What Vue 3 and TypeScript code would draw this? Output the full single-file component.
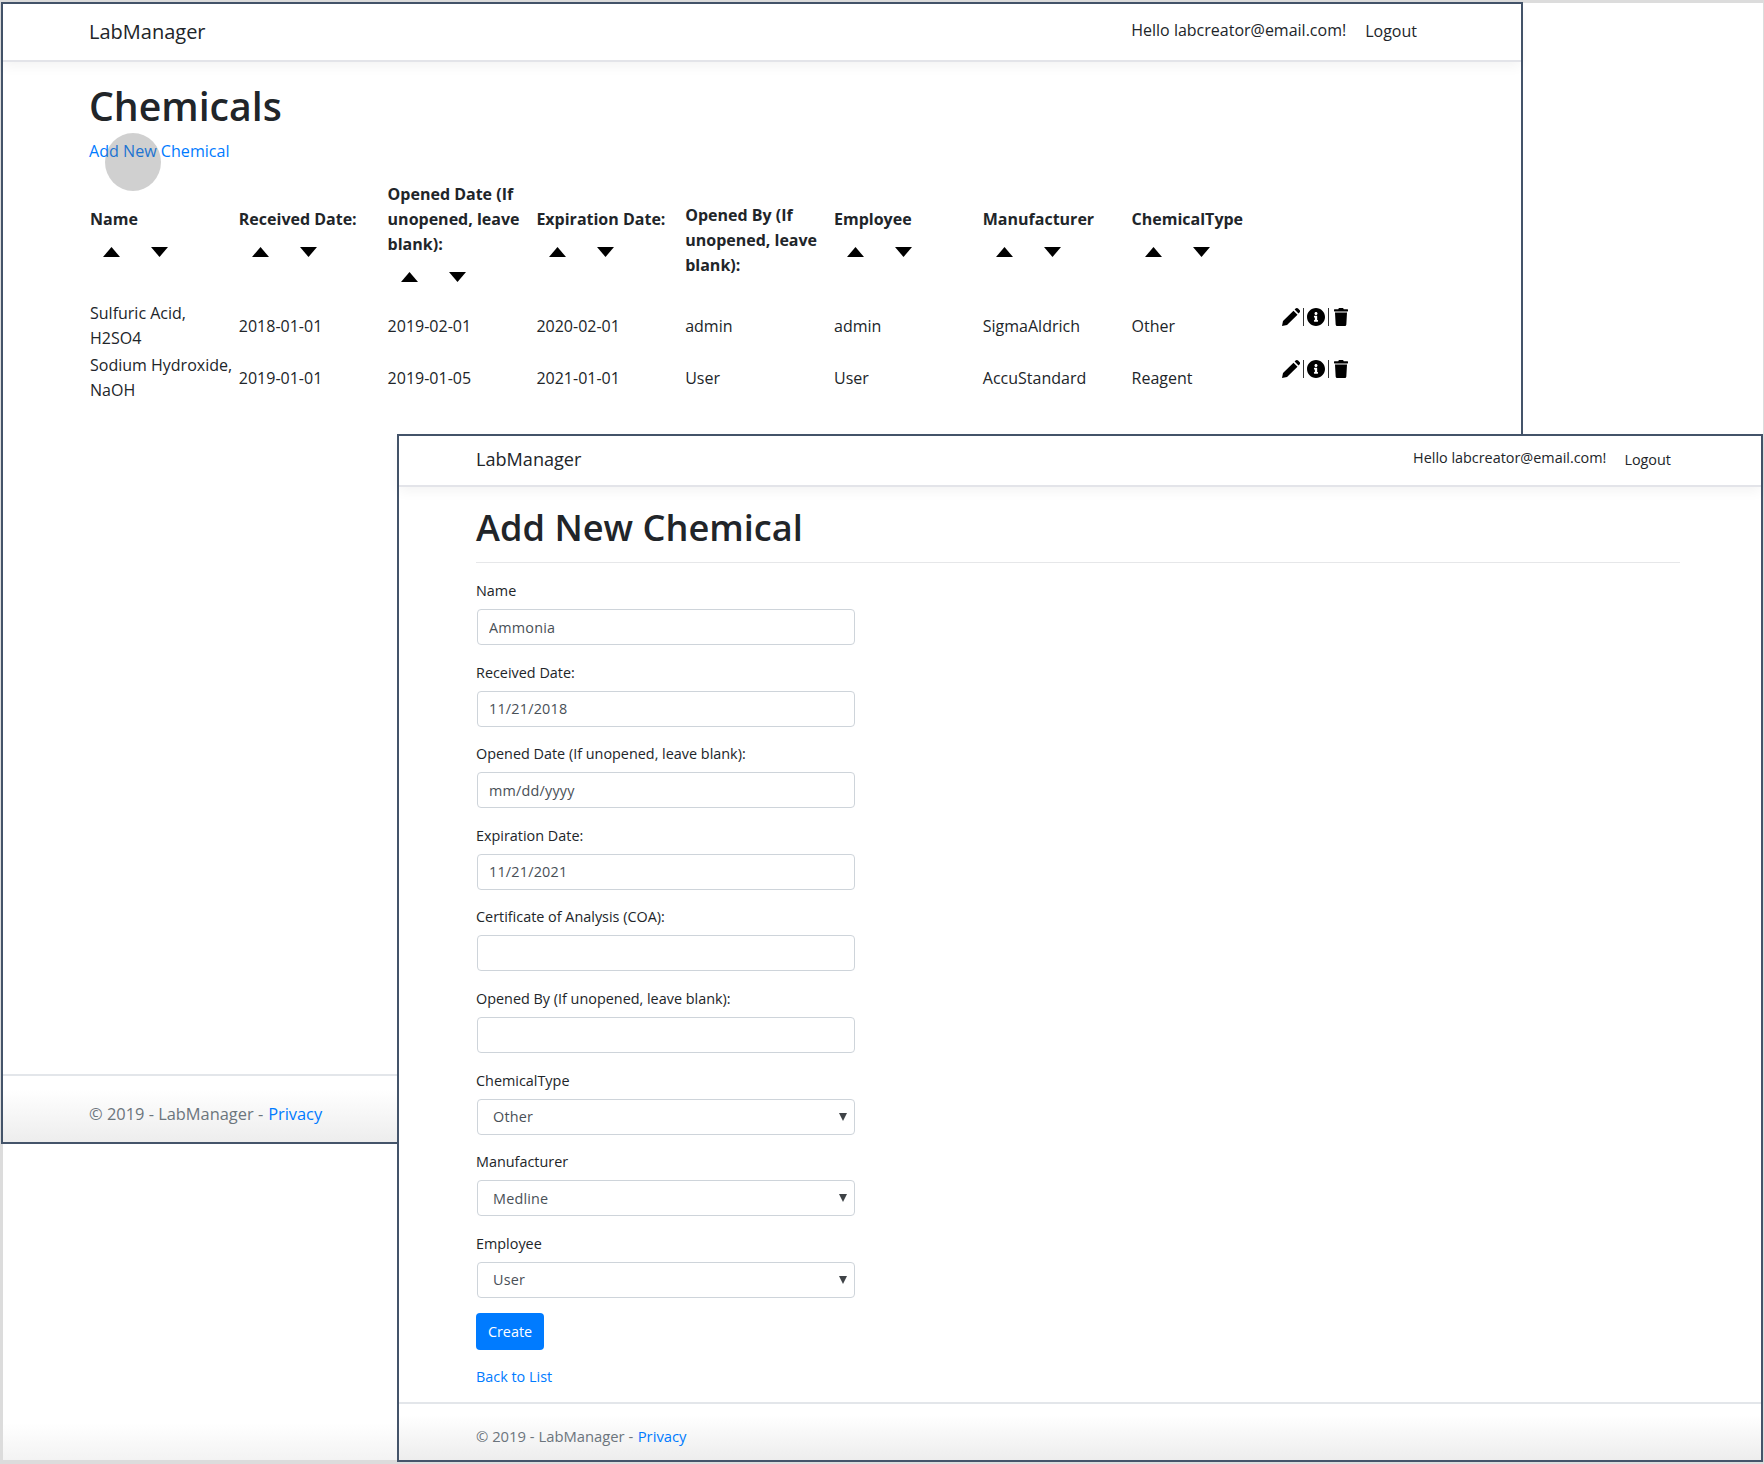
<template>
  <div class="page">
    <div class="backdrop"></div>

    <section class="window list-window">
      <header class="navbar">
        <span class="brand">LabManager</span>
        <span class="hello">Hello labcreator@email.com!</span>
        <span class="logout">Logout</span>
      </header>
      <main class="list-main">
        <h1 class="list-title">Chemicals</h1>
        <a class="link add-link" href="#">Add New Chemical</a>
        <table class="chem-table">
          <colgroup>
            <col v-for="n in 9" :key="n" class="chem-col" />
          </colgroup>
          <thead>
            <tr>
              <th v-for="col in columns" :key="col.label" :class="{ 'no-sort': !col.sort }">
                {{ col.label }}
                <div v-if="col.sort" class="sort">
                  <svg width="17" height="10" viewBox="0 0 17 10"><path d="M8.5 0 17 10H0z" /></svg>
                  <svg width="17" height="10" viewBox="0 0 17 10"><path d="M0 0h17L8.5 10z" /></svg>
                </div>
              </th>
              <th></th>
            </tr>
          </thead>
          <tbody>
            <tr v-for="row in rows" :key="row[0]">
              <td v-for="cell in row" :key="cell">{{ cell }}</td>
              <td class="actions-cell">
                <div class="actions">
                  <svg class="pencil" viewBox="0 0 18 18"><path d="M0 18l1-5L11.5 2.7l4 4L5 17zM12.6 1.6l1-1a1.8 1.8 0 0 1 2.5 0l1.4 1.4a1.8 1.8 0 0 1 0 2.5l-1 1z" /></svg>
                  <i class="bar"></i>
                  <svg class="info" viewBox="8 8 496 496"><path d="M256 8C119.043 8 8 119.083 8 256c0 136.997 111.043 248 248 248s248-111.003 248-248C504 119.083 392.957 8 256 8zm0 110c23.196 0 42 18.804 42 42s-18.804 42-42 42-42-18.804-42-42 18.804-42 42-42zm56 254c0 6.627-5.373 12-12 12h-88c-6.627 0-12-5.373-12-12v-24c0-6.627 5.373-12 12-12h12v-64h-12c-6.627 0-12-5.373-12-12v-24c0-6.627 5.373-12 12-12h64c6.627 0 12 5.373 12 12v100h12c6.627 0 12 5.373 12 12v24z" /></svg>
                  <i class="bar"></i>
                  <svg class="trash" viewBox="0 0 448 512" preserveAspectRatio="none"><path d="M432 32H312l-9.4-18.7A24 24 0 0 0 281.1 0H166.8a23.72 23.72 0 0 0-21.4 13.3L136 32H16A16 16 0 0 0 0 48v32a16 16 0 0 0 16 16h416a16 16 0 0 0 16-16V48a16 16 0 0 0-16-16zM53.2 467a48 48 0 0 0 47.9 45h245.8a48 48 0 0 0 47.9-45L416 128H32z" /></svg>
                </div>
              </td>
            </tr>
          </tbody>
        </table>
      </main>
      <footer class="footer">
        © 2019 - LabManager - <a class="link" href="#">Privacy</a>
      </footer>
      <div class="click-dot"></div>
    </section>

    <section class="window form-window">
      <header class="navbar">
        <span class="brand">LabManager</span>
        <span class="hello">Hello labcreator@email.com!</span>
        <span class="logout">Logout</span>
      </header>
      <main class="form-main">
        <h1 class="form-title">Add New Chemical</h1>
        <hr class="rule" />
        <form class="chem-form" @submit.prevent>
          <div v-for="field in inputs" :key="field.label" class="group">
            <label class="label">{{ field.label }}</label>
            <input class="control" type="text" :value="field.value" :placeholder="field.placeholder" />
          </div>
          <div v-for="field in selects" :key="field.label" class="group">
            <label class="label">{{ field.label }}</label>
            <div class="select-wrap">
              <select class="control select">
                <option>{{ field.value }}</option>
              </select>
              <span class="caret"></span>
            </div>
          </div>
          <button class="create" type="submit">Create</button>
        </form>
        <a class="link back" href="#">Back to List</a>
      </main>
      <footer class="footer">
        © 2019 - LabManager - <a class="link" href="#">Privacy</a>
      </footer>
    </section>
  </div>
</template>

<script setup lang="ts">
const columns = [
  { label: 'Name', sort: true },
  { label: 'Received Date:', sort: true },
  { label: 'Opened Date (If unopened, leave blank):', sort: true },
  { label: 'Expiration Date:', sort: true },
  { label: 'Opened By (If unopened, leave blank):', sort: false },
  { label: 'Employee', sort: true },
  { label: 'Manufacturer', sort: true },
  { label: 'ChemicalType', sort: true },
]

const rows = [
  ['Sulfuric Acid, H2SO4', '2018-01-01', '2019-02-01', '2020-02-01', 'admin', 'admin ', 'SigmaAldrich', 'Other'],
  ['Sodium Hydroxide, NaOH', '2019-01-01', '2019-01-05', '2021-01-01', 'User', 'User ', 'AccuStandard', 'Reagent'],
]

const inputs = [
  { label: 'Name', value: 'Ammonia' },
  { label: 'Received Date:', value: '11/21/2018' },
  { label: 'Opened Date (If unopened, leave blank):', value: '', placeholder: 'mm/dd/yyyy' },
  { label: 'Expiration Date:', value: '11/21/2021' },
  { label: 'Certificate of Analysis (COA):', value: '' },
  { label: 'Opened By (If unopened, leave blank):', value: '' },
]

const selects = [
  { label: 'ChemicalType', value: 'Other' },
  { label: 'Manufacturer', value: 'Medline' },
  { label: 'Employee', value: 'User' },
]
</script>

<style>
html,
body {
  margin: 0;
  background: #fff;
}
</style>

<style scoped>
.page {
  position: relative;
  width: 1764px;
  height: 1464px;
  overflow: hidden;
  box-sizing: border-box;
  padding: 3px 1px 4px 3px;
  background: #dcdcdc;
  font-family: "Open Sans", "Noto Sans", sans-serif;
  color: #212529;
}

.backdrop {
  height: 100%;
  background: linear-gradient(to bottom, #fff 0, #fff 1420px, #f3f3f3 100%);
}

.window {
  position: absolute;
  box-sizing: border-box;
  display: flex;
  flex-direction: column;
  border: 2px solid #44546a;
  background: #fff;
}

.list-window {
  left: 1px;
  top: 2px;
  width: 1522px;
  height: 1142px;
  font-size: 16px;
  line-height: 25px;
}

.form-window {
  left: 397px;
  top: 434px;
  width: 1366px;
  height: 1028px;
  font-size: 14.4px;
  line-height: 23px;
}

.navbar {
  display: flex;
  align-items: center;
  flex-shrink: 0;
  box-sizing: border-box;
  border-bottom: 2px solid #e3e4e9;
  box-shadow: 0 4px 12px rgba(0, 0, 0, 0.05);
}

.list-window .navbar {
  height: 58px;
  padding: 0 104px 1px 86px;
}

.form-window .navbar {
  height: 51px;
  padding: 0 90px 3px 77px;
}

.brand {
  margin-right: auto;
  font-size: 20px;
}

.form-window .brand {
  font-size: 18.1px;
}

.hello {
  margin-bottom: 3px;
}

.logout {
  margin-left: 19px;
}

.form-window .logout {
  margin-left: 18px;
}

.link {
  color: #007bff;
  text-decoration: none;
}

.list-main {
  flex: 1;
  padding: 0 86px;
}

.list-title {
  margin: 19px 0 8px;
  font-size: 39.2px;
  font-weight: 600;
  line-height: 50px;
}

.add-link {
  display: block;
  margin-bottom: 18px;
  font-size: 16.1px;
}

.chem-table {
  table-layout: fixed;
  width: 1339.2px;
  border-collapse: collapse;
}

.chem-col {
  width: 148.8px;
}

.chem-table th {
  padding: 0 6px 4px 1px;
  text-align: left;
  vertical-align: middle;
  font-weight: 700;
}

.chem-table th.no-sort {
  padding: 0 6px 2px 1px;
}

.sort {
  display: flex;
  gap: 31px;
  align-items: center;
  height: 40px;
  padding-left: 13px;
}

.sort svg {
  display: block;
  fill: #000;
}

.chem-table td {
  padding: 0 4px 2px 1px;
  vertical-align: middle;
}

.actions {
  display: flex;
  align-items: center;
  gap: 3px;
  margin: -18px 0 0 2px;
  height: 18px;
}

.actions svg {
  display: block;
  height: 18px;
  fill: #000;
}

.pencil {
  width: 18px;
}

.info {
  width: 18px;
}

.trash {
  width: 14px;
  margin-left: 2px;
}

.bar {
  width: 1px;
  height: 18px;
  background: #333;
}

.footer {
  flex-shrink: 0;
  box-sizing: border-box;
  display: flex;
  align-items: center;
  gap: 0.3em;
  border-top: 2px solid #e3e6ea;
  background: linear-gradient(to bottom, #fff 20%, #ededed 100%);
  color: #6c757d;
}

.list-window .footer {
  height: 68px;
  padding: 9px 0 0 86px;
  font-size: 16.4px;
}

.form-window .footer {
  height: 58px;
  padding: 8px 0 0 77px;
  font-size: 14.8px;
}

.click-dot {
  position: absolute;
  left: 102px;
  top: 129px;
  width: 56px;
  height: 58px;
  border-radius: 50%;
  background: rgba(100, 98, 100, 0.3);
}

.form-main {
  flex: 1;
  padding: 0 81px 0 77px;
}

.form-title {
  margin: 17px 0 12px;
  font-size: 36.2px;
  font-weight: 600;
  line-height: 46px;
}

.rule {
  height: 1px;
  margin: 0 0 16px;
  border: 0;
  background: #e6e7e9;
}

.chem-form {
  width: 379px;
}

.group {
  margin-bottom: 15.6px;
}

.label {
  display: block;
  margin-bottom: 7px;
}

.control {
  display: block;
  box-sizing: border-box;
  width: 378px;
  height: 36px;
  margin: 0 0 0 1px;
  padding: 0 11px;
  border: 1.5px solid #ced4da;
  border-radius: 4px;
  background: #fff;
  color: #495057;
  font: inherit;
  letter-spacing: 0.2px;
}

.control::placeholder {
  color: #495057;
  opacity: 1;
}

.select {
  appearance: none;
  padding-left: 15px;
}

.select-wrap {
  position: relative;
}

.caret {
  position: absolute;
  right: 8px;
  top: 14px;
  width: 0;
  height: 0;
  border-left: 4px solid transparent;
  border-right: 4px solid transparent;
  border-top: 8px solid #3f4347;
}

.create {
  display: block;
  width: 68px;
  height: 37px;
  margin: 0 0 15px;
  padding: 0;
  border: 0;
  border-radius: 4px;
  background: #007bff;
  color: #fff;
  font: inherit;
}

.back {
  display: block;
}
</style>
